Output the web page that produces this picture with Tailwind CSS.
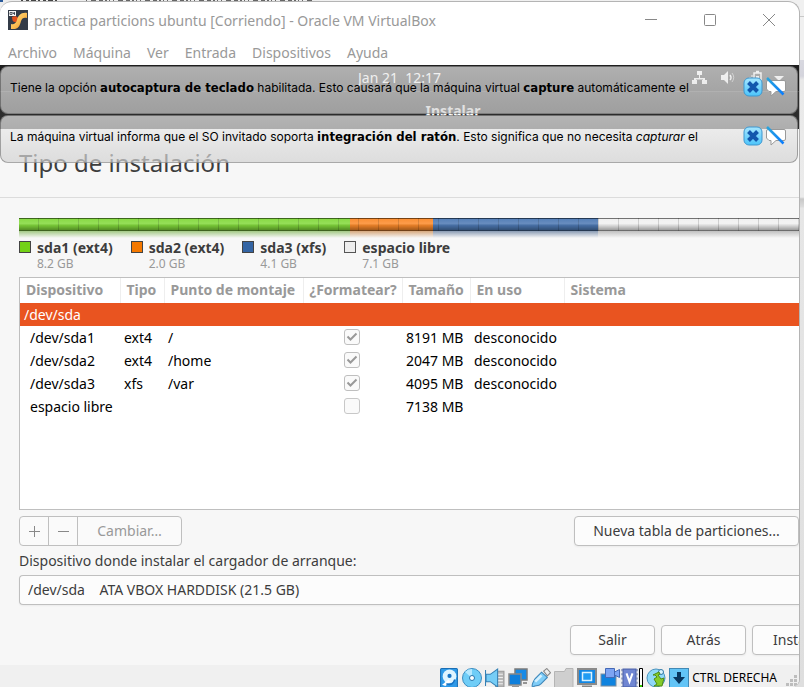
<!DOCTYPE html>
<html lang="es">
<head>
<meta charset="utf-8">
<meta name="viewport" content="width=device-width, initial-scale=1">
<title>practica particions ubuntu [Corriendo] - Oracle VM VirtualBox</title>
<script src="https://cdn.jsdelivr.net/npm/@tailwindcss/browser@4"></script>
</head>
<body class="h-screen overflow-hidden bg-[linear-gradient(to_bottom,#f0f0f0_16px,#c8c8c8_16px,#c8c8c8_17px,#f0f0f0_17px,#f0f0f0_60px,#d8d8e0_60px,#d4d4dc_76px,#e9e9e9_80px,#ebebeb_197px,#c8c8c8_199px,#dcdcdc_207px,#e6e6e6_208px,#dedede_100%)] pt-px pr-1 font-['Noto_Sans',sans-serif] text-sm">

<!-- sliver of the window lying behind -->
<svg class="absolute top-0 left-0 h-[4px] w-[320px]" viewBox="0 0 320 4" fill="none" aria-hidden="true">
  <rect width="320" height="4" fill="#ededed"/>
  <path d="M0 1h3" stroke="#2a5a9a" stroke-width="2"/>
  <path d="M21 1h39" stroke="#444" stroke-width="2" stroke-dasharray="2 3 3 2 5 2"/>
  <path d="M86 1h226" stroke="#666" stroke-width="2" stroke-dasharray="1 4 5 3 4 2 2 2 1 3"/>
</svg>

<main class="relative flex h-full flex-col overflow-hidden rounded-t-xl rounded-br-lg border-t border-r border-[#b4b4b4] bg-white">
  <header class="flex h-[36px] shrink-0 items-center pl-2 text-[#999]">
    <svg class="mr-[6px] size-5 shrink-0" viewBox="0 0 20 20" aria-hidden="true">
      <defs><linearGradient id="gold" x1="0" y1="0" x2="1" y2="1"><stop offset="0" stop-color="#ffe08a"/><stop offset=".5" stop-color="#fbbf55"/><stop offset="1" stop-color="#ee8f1d"/></linearGradient></defs>
      <rect width="20" height="20" fill="#333b47"/>
      <path d="M4 7c2-1 5-1 6 1s-1 4-3 4-3-2-3-5z" fill="#e2501c"/>
      <path d="M19 3v5c-3-1-5 0-6 3-1 4-2 7-6 8H3v-5c3 1 5-1 6-4 1-4 4-8 10-7z" fill="url(#gold)"/>
      <rect x="1" y="1" width="7" height="5" fill="#f5f5f5"/>
      <path d="M2 2.500h2v2H2zM5 2v1.500h2M6.500 2v3" fill="none" stroke="#333b47" stroke-width=".8"/>
    </svg>
    <h1 class="grow truncate pt-px">practica particions ubuntu [Corriendo] - Oracle VM VirtualBox</h1>
    <div class="flex shrink-0 gap-[35px] pr-[18px]">
      <button class="grid size-6 place-items-center" aria-label="Minimizar"><svg class="size-[14px]" viewBox="0 0 14 14" stroke="#888" fill="none"><path d="M1 6.500h12"/></svg></button>
      <button class="grid size-6 place-items-center" aria-label="Maximizar"><svg class="size-[14px]" viewBox="0 0 14 14" stroke="#888" fill="none"><rect x="1.500" y="1.500" width="11" height="11" rx="1"/></svg></button>
      <button class="grid size-6 place-items-center" aria-label="Cerrar"><svg class="size-[14px]" viewBox="0 0 14 14" stroke="#888" fill="none"><path d="M1 1l12 12M13 1L1 13"/></svg></button>
    </div>
  </header>
  <nav class="flex h-[27px] shrink-0 items-center gap-4 pt-[2px] pl-2 text-[#999]">
    <button>Archivo</button><button>Máquina</button><button>Ver</button><button>Entrada</button><button>Dispositivos</button><button>Ayuda</button>
  </nav>

  <!-- guest screen -->
  <section class="relative flex grow flex-col overflow-hidden bg-[#f7f7f7] text-[#3d3d3d]">
    <div class="relative flex h-[27px] shrink-0 items-center justify-center border-b border-[#484848] bg-[#1f1f1f] text-white">
      <time>Jan 21&nbsp; 12:17</time>
      <div class="absolute top-[5px] right-[15px] flex items-center gap-[13px]">
        <svg class="size-[15px]" viewBox="0 0 15 15" fill="#fff" aria-hidden="true"><path d="M5 1h5v4H8v3h5v2h2v4h-5v-4h1V9.500H4V10h1v4H0v-4h2V8h5V5H5z"/></svg>
        <svg class="size-[15px]" viewBox="0 0 15 15" fill="none" stroke="#fff" aria-hidden="true"><path d="M1 5h3l4-4v13l-4-4H1z" fill="#fff" stroke="none"/><path d="M10 5q2 2.500 0 5" stroke-width="1.500"/><path d="M12 3q3.500 4.500 0 9" opacity=".6"/></svg>
        <svg class="size-[15px]" viewBox="0 0 15 15" fill="none" stroke="#fff" aria-hidden="true"><path d="M6 3h7v11H6zM8 1.500h3" stroke-width="1.500"/><path d="M8 6h3v6H8z" fill="#fff" stroke="none"/><path d="M2 7v5M4 5v2"/></svg>
        <svg class="-ml-[2px] h-[6px] w-[10px]" viewBox="0 0 10 6" fill="#fff" aria-hidden="true"><path d="M0 1h10L5 6z"/></svg>
      </div>
    </div>
    <div class="flex h-[37px] shrink-0 items-center justify-center bg-[#2c2c2c] pl-[107px] font-bold text-white">Instalar</div>
    <div class="flex h-[69px] shrink-0 items-center border-b border-[#dcdcdc] pl-[19px]">
      <h2 class="text-2xl">Tipo de instalación</h2>
    </div>

    <div class="flex flex-col pt-5 pl-[19px]">
      <div class="relative flex h-[13px]">
        <div class="relative h-full w-[331px] shrink-0 bg-[#82d93b]"><i class="absolute top-full left-0 h-[7px] w-full bg-linear-to-b from-[#4e9a13]/50 to-transparent"></i></div>
        <div class="relative h-full w-[83px] shrink-0 bg-[#fb8a2a]"><i class="absolute top-full left-0 h-[7px] w-full bg-linear-to-b from-[#b55a05]/50 to-transparent"></i></div>
        <div class="relative h-full w-[165px] shrink-0 bg-[#4d79b3]"><i class="absolute top-full left-0 h-[7px] w-full bg-linear-to-b from-[#1c3f6f]/50 to-transparent"></i></div>
        <div class="relative h-full grow bg-[#f0f0f0]"><i class="absolute top-full left-0 h-[7px] w-full bg-linear-to-b from-[#888888]/50 to-transparent"></i></div>
        <div class="absolute inset-0 border-y border-t-black/30 border-b-black/55 bg-[linear-gradient(to_bottom,rgb(255_255_255/0.05),rgb(255_255_255/0.15)_40%,rgb(0_0_0/0.1)_60%,rgb(0_0_0/0.35)),repeating-linear-gradient(to_right,transparent_0_19px,rgb(0_0_0/0.16)_19px_20px)]"></div>
      </div>
      <ul class="flex gap-[18px] pt-[7px]">
        <li class="flex gap-[6px]"><i class="mt-[3px] size-3 border border-[#444] bg-[#73d216]"></i><div><b class="block leading-5">sda1 (ext4)</b><span class="block text-xs leading-3 text-[#999]">8.2 GB</span></div></li>
        <li class="flex gap-[6px]"><i class="mt-[3px] size-3 border border-[#444] bg-[#f57900]"></i><div><b class="block leading-5">sda2 (ext4)</b><span class="block text-xs leading-3 text-[#999]">2.0 GB</span></div></li>
        <li class="flex gap-[6px]"><i class="mt-[3px] size-3 border border-[#444] bg-[#3465a4]"></i><div><b class="block leading-5">sda3 (xfs)</b><span class="block text-xs leading-3 text-[#999]">4.1 GB</span></div></li>
        <li class="flex gap-[6px]"><i class="mt-[3px] size-3 border border-[#555] bg-[#eee]"></i><div><b class="block leading-5">espacio libre</b><span class="block text-xs leading-3 text-[#999]">7.1 GB</span></div></li>
      </ul>

      <div class="mt-[7px] h-[233px] border-y border-l border-[#bfbfbf] bg-white">
        <table class="w-full table-fixed text-left text-black">
          <colgroup><col class="w-[100px]"><col class="w-[44px]"><col class="w-[139px]"><col class="w-[99px]"><col class="w-[68px]"><col class="w-[94px]"><col></colgroup>
          <thead>
            <tr class="h-[25px] text-[#999] whitespace-nowrap">
              <th class="border-r border-[#eee] pb-px pl-[6px]">Dispositivo</th><th class="border-r border-[#eee] pb-px pl-[6px]">Tipo</th><th class="border-r border-[#eee] pb-px pl-[6px]">Punto de montaje</th><th class="border-r border-[#eee] pb-px pl-[6px]">¿Formatear?</th><th class="border-r border-[#eee] pb-px pl-[6px]">Tamaño</th><th class="border-r border-[#eee] pb-px pl-[6px]">En uso</th><th class="pb-px pl-[6px]">Sistema</th>
            </tr>
          </thead>
          <tbody class="whitespace-nowrap">
            <tr class="h-[23px] bg-[#e95420] text-white"><td colspan="7" class="pl-1">/dev/sda</td></tr>
            <tr class="h-[23px]"><td class="pl-[10px]">/dev/sda1</td><td class="pl-1">ext4</td><td class="pl-1">/</td>
              <td class="pr-[2px] pb-px"><label class="mx-auto grid size-4 place-items-center"><input type="checkbox" checked disabled aria-label="Formatear sda1" class="col-start-1 row-start-1 size-4 appearance-none rounded-[3px] border border-[#bfbfbf] bg-[#fafafa]"><svg class="col-start-1 row-start-1 size-3" viewBox="0 0 12 12" fill="none" stroke="#999" stroke-width="2"><path d="M1.500 5.500l3 3 6-6"/></svg></label></td>
              <td class="pl-1">8191 MB</td><td class="pl-1">desconocido</td><td></td></tr>
            <tr class="h-[23px]"><td class="pl-[10px]">/dev/sda2</td><td class="pl-1">ext4</td><td class="pl-1">/home</td>
              <td class="pr-[2px] pb-px"><label class="mx-auto grid size-4 place-items-center"><input type="checkbox" checked disabled aria-label="Formatear sda2" class="col-start-1 row-start-1 size-4 appearance-none rounded-[3px] border border-[#bfbfbf] bg-[#fafafa]"><svg class="col-start-1 row-start-1 size-3" viewBox="0 0 12 12" fill="none" stroke="#999" stroke-width="2"><path d="M1.500 5.500l3 3 6-6"/></svg></label></td>
              <td class="pl-1">2047 MB</td><td class="pl-1">desconocido</td><td></td></tr>
            <tr class="h-[23px]"><td class="pl-[10px]">/dev/sda3</td><td class="pl-1">xfs</td><td class="pl-1">/var</td>
              <td class="pr-[2px] pb-px"><label class="mx-auto grid size-4 place-items-center"><input type="checkbox" checked disabled aria-label="Formatear sda3" class="col-start-1 row-start-1 size-4 appearance-none rounded-[3px] border border-[#bfbfbf] bg-[#fafafa]"><svg class="col-start-1 row-start-1 size-3" viewBox="0 0 12 12" fill="none" stroke="#999" stroke-width="2"><path d="M1.500 5.500l3 3 6-6"/></svg></label></td>
              <td class="pl-1">4095 MB</td><td class="pl-1">desconocido</td><td></td></tr>
            <tr class="h-[23px]"><td class="pl-[10px]">espacio libre</td><td></td><td></td>
              <td class="pr-[2px] pb-px"><label class="mx-auto grid size-4"><input type="checkbox" disabled aria-label="Formatear espacio libre" class="size-4 appearance-none rounded-[3px] border border-[#c8c8c8] bg-[#fafafa]"></label></td>
              <td class="pl-1">7138 MB</td><td></td><td></td></tr>
          </tbody>
        </table>
      </div>

      <div class="mt-[6px] flex justify-between">
        <div class="flex h-[30px] divide-x divide-[#bfbfbf] overflow-hidden rounded-[4px] border border-[#bfbfbf] bg-[#fafafa] text-[#999]">
          <button disabled class="grid w-[29px] place-items-center" aria-label="Añadir"><svg class="size-[11px]" viewBox="0 0 11 11" stroke="#888"><path d="M0 5.500h11M5.500 0v11"/></svg></button>
          <button disabled class="grid w-[29px] place-items-center" aria-label="Quitar"><svg class="size-[11px]" viewBox="0 0 11 11" stroke="#888"><path d="M0 5.500h11"/></svg></button>
          <button disabled class="w-[103px]">Cambiar…</button>
        </div>
        <button class="h-[30px] w-[225px] rounded-[4px] border border-[#bfbfbf] bg-[#fcfcfc] shadow-xs">Nueva tabla de particiones...</button>
      </div>

      <label for="boot" class="mt-[5px] leading-5">Dispositivo donde instalar el cargador de arranque:</label>
      <select id="boot" class="mt-1 h-[30px] appearance-none rounded-l-[4px] border-y border-l border-[#bfbfbf] bg-[#fcfcfc] pl-2 shadow-xs">
        <option>/dev/sda&nbsp;&nbsp;&nbsp; ATA VBOX HARDDISK (21.5 GB)</option>
      </select>
    </div>

    <div class="mt-5 -mr-[65px] flex justify-end gap-[6px]">
      <button class="h-[30px] w-[85px] rounded-[4px] border border-[#bfbfbf] bg-[#fcfcfc] shadow-xs">Salir</button>
      <button class="h-[30px] w-[85px] rounded-[4px] border border-[#bfbfbf] bg-[#fcfcfc] shadow-xs">Atrás</button>
      <button class="h-[30px] w-[112px] shrink-0 rounded-[4px] border border-[#bfbfbf] bg-[#fcfcfc] pl-5 text-left whitespace-nowrap shadow-xs">Instalar ahora</button>
    </div>

    <!-- notifications over the guest screen -->
    <div class="absolute inset-x-0 top-px flex flex-col gap-px pr-px font-['Inter',sans-serif] text-xs text-black">
      <div class="flex h-[48px] items-start rounded-lg border border-black/30 bg-linear-to-b from-[#eeeeee]/70 to-[#d0d0d0]/70 pt-[10px] pr-[11px] pl-[9px]">
        <p class="grow overflow-hidden leading-[22px] whitespace-nowrap">Tiene la opción <b class="font-['DejaVu_Sans_Condensed','DejaVu_Sans',sans-serif] text-[13px]">autocaptura de teclado</b> habilitada. Esto causará que la máquina virtual <b class="font-['DejaVu_Sans_Condensed','DejaVu_Sans',sans-serif] text-[13px]">capture</b> automáticamente el</p>
        <div class="flex shrink-0 gap-[3px]">
          <button aria-label="Cerrar aviso"><svg class="size-5" viewBox="0 0 20 20"><use href="#close"/></svg></button>
          <button aria-label="No mostrar de nuevo"><svg class="size-5" viewBox="0 0 20 20"><use href="#mute"/></svg></button>
        </div>
      </div>
      <div class="flex h-[48px] items-start rounded-lg border border-black/30 bg-linear-to-b from-[#eeeeee]/70 to-[#d0d0d0]/70 pt-[10px] pr-[11px] pl-[9px]">
        <p class="grow overflow-hidden leading-[22px] whitespace-nowrap">La máquina virtual informa que el SO invitado soporta <b class="font-['DejaVu_Sans_Condensed','DejaVu_Sans',sans-serif] text-[13px]">integración del ratón</b>. Esto significa que no necesita <em>capturar</em> el</p>
        <div class="flex shrink-0 gap-[3px]">
          <button aria-label="Cerrar aviso"><svg class="size-5" viewBox="0 0 20 20"><use href="#close"/></svg></button>
          <button aria-label="No mostrar de nuevo"><svg class="size-5" viewBox="0 0 20 20"><use href="#mute"/></svg></button>
        </div>
      </div>
    </div>
  </section>

  <footer class="flex h-[22px] shrink-0 items-start justify-end gap-[3px] bg-[#f0f0f0] pt-[3px] text-black">
    <svg class="size-5" viewBox="0 0 19 19"><rect x="1.500" y=".5" width="16" height="18" rx="1" fill="#2f9ae8" stroke="#1b6fb5"/><circle cx="10" cy="8" r="6.500" fill="#dff4ff"/><circle cx="10" cy="7.500" r="2" fill="#1672c4"/><path d="M3 16l6-5 2 2-5 4z" fill="#fff"/><path d="M7 15c5 2 7-1 8-4" fill="none" stroke="#1672c4" stroke-width="1.500"/></svg>
    <svg class="size-5" viewBox="0 0 20 20"><circle cx="10" cy="10" r="9.500" fill="#6fcdf7" stroke="#3a8cc0"/><path d="M10 10L3 4a9 9 0 017-3z" fill="#b5e8ff"/><circle cx="10" cy="10" r="2.500" fill="#fff" stroke="#2876ad"/></svg>
    <svg class="size-5" viewBox="0 0 19 19"><path d="M11 3h7v15h-8z" fill="#b8b8b8" stroke="#999"/><path d="M12 6h5M12 9h5M12 12h5M12 15h5" stroke="#eee"/><path d="M.5 2v15M1 6h4l7-5v17l-7-5H1z" fill="#76cdf6" stroke="#3480b5"/></svg>
    <svg class="size-5" viewBox="0 0 20 20"><rect x="7" y="1" width="12" height="11" fill="#178ae6" stroke="#7a7a7a" stroke-width="1.500"/><rect x="1" y="6" width="12" height="11" fill="#0f7fdc" stroke="#888" stroke-width="1.500"/><path d="M4 19h7M15 15h4" stroke="#777" stroke-width="1.500"/></svg>
    <svg class="size-5" viewBox="0 0 19 19"><path d="M12 3l3-2.500 3.500 4-3 3z" fill="#eee" stroke="#888"/><path d="M10 4l5.500 5-6 6c-3 3-6 1-8 3.500C0 16 2 13 4 10z" fill="#7fcdf8" stroke="#3f86b8"/><path d="M4 13l6-6" stroke="#d5f1ff" stroke-width="2.500"/></svg>
    <svg class="size-5" viewBox="0 0 20 20"><path d="M.5 20V3.500h10l1.500-3h7V20z" fill="#cfcfcf" stroke="#b5b5b5"/></svg>
    <svg class="size-5" viewBox="0 0 20 20"><rect x="1" y="1" width="18" height="15" fill="#1187e5" stroke="#8a8a8a" stroke-width="2"/><rect x="5.500" y="4.500" width="9" height="8" fill="#209cf3" stroke="#d9f2ff" stroke-width="1.500"/><path d="M5 18.500h10" stroke="#888" stroke-width="2"/></svg>
    <svg class="size-5" viewBox="0 0 20 20"><rect x="1" y="6" width="15" height="12" fill="#0f83df" stroke="#7d8ea0"/><path d="M5.500.5h9v9h-9zM14.500 4l5-2.500v8l-5-2.500z" fill="#7da4f3" stroke="#4468b5"/></svg>
    <svg class="-mx-[2px] h-5 w-[17px]" viewBox="0 0 17 19" preserveAspectRatio="none"><rect x="2" y="1" width="13" height="17" fill="#7086d2" stroke="#485ea8"/><path d="M1 1v17M16 1v17" stroke="#52669f" stroke-dasharray="2 2"/><path d="M5.500 5l3 8 3-8" fill="none" stroke="#fff" stroke-width="2"/></svg>
    <svg class="h-5 w-1" viewBox="0 0 4 20"><path d="M.5.500h3V21h-3z" fill="#fff" stroke="#000"/><path d="M1 17h2v3H1z" fill="#3c0"/></svg>
    <svg class="size-5" viewBox="0 0 20 20"><circle cx="10" cy="10" r="9" fill="#8fd8f7" stroke="#4b94bf"/><circle cx="15" cy="4" r="2.500" fill="#d9f4ff" stroke="#2f78a8"/><path d="M7 7l6-3 1 2-2 1 3 4 3-1-2 8H8l3-2-3-5 3-2-2-2z" fill="#85cc2b" stroke="#4f8b14"/></svg>
    <svg class="size-5" viewBox="0 0 20 20"><rect x=".5" y=".5" width="19" height="19" fill="#62c4f6" stroke="#4189b5"/><path d="M8 4h4v5h4l-6 7-6-7h4z" fill="#07365f"/></svg>
    <span class="text-xs leading-5">CTRL DERECHA</span>
    <svg class="mt-[6px] ml-[5px] size-[14px]" viewBox="0 0 14 14" fill="#bdbdbd"><path d="M9 1h3v3H9zM5 5h3v3H5zM9 5h3v3H9zM1 9h3v3H1zM5 9h3v3H5zM9 9h3v3H9z"/></svg>
  </footer>
</main>

<svg class="absolute size-0" aria-hidden="true">
  <defs>
    <linearGradient id="sky" x1="0" y1="0" x2="0" y2="1"><stop offset="0" stop-color="#a6e6ff"/><stop offset="1" stop-color="#4cc4fa"/></linearGradient>
    <linearGradient id="slash" gradientUnits="userSpaceOnUse" x1="1" y1="1" x2="18" y2="18"><stop offset="0" stop-color="#2aa5dc"/><stop offset="1" stop-color="#0a7cff"/></linearGradient>
    <symbol id="close" viewBox="0 0 20 20"><rect x="1" y="1" width="18" height="18" rx="5" fill="url(#sky)" stroke="#3f97cf"/><path d="M5.500 5.500l9 9M14.500 5.500l-9 9" stroke="#1257ad" stroke-width="4"/></symbol>
    <symbol id="mute" viewBox="0 0 20 20"><path d="M2 3.500h16q1.500 0 1.500 1.500v8q0 1.500-1.500 1.500h-8L5 19v-4.500H3L.5 12V5q0-1.500 1.500-1.500z" fill="#fff" stroke="#999"/><path d="M1 1l16.500 16.500" stroke="url(#slash)" stroke-width="2.500"/></symbol>
  </defs>
</svg>
</body>
</html>
